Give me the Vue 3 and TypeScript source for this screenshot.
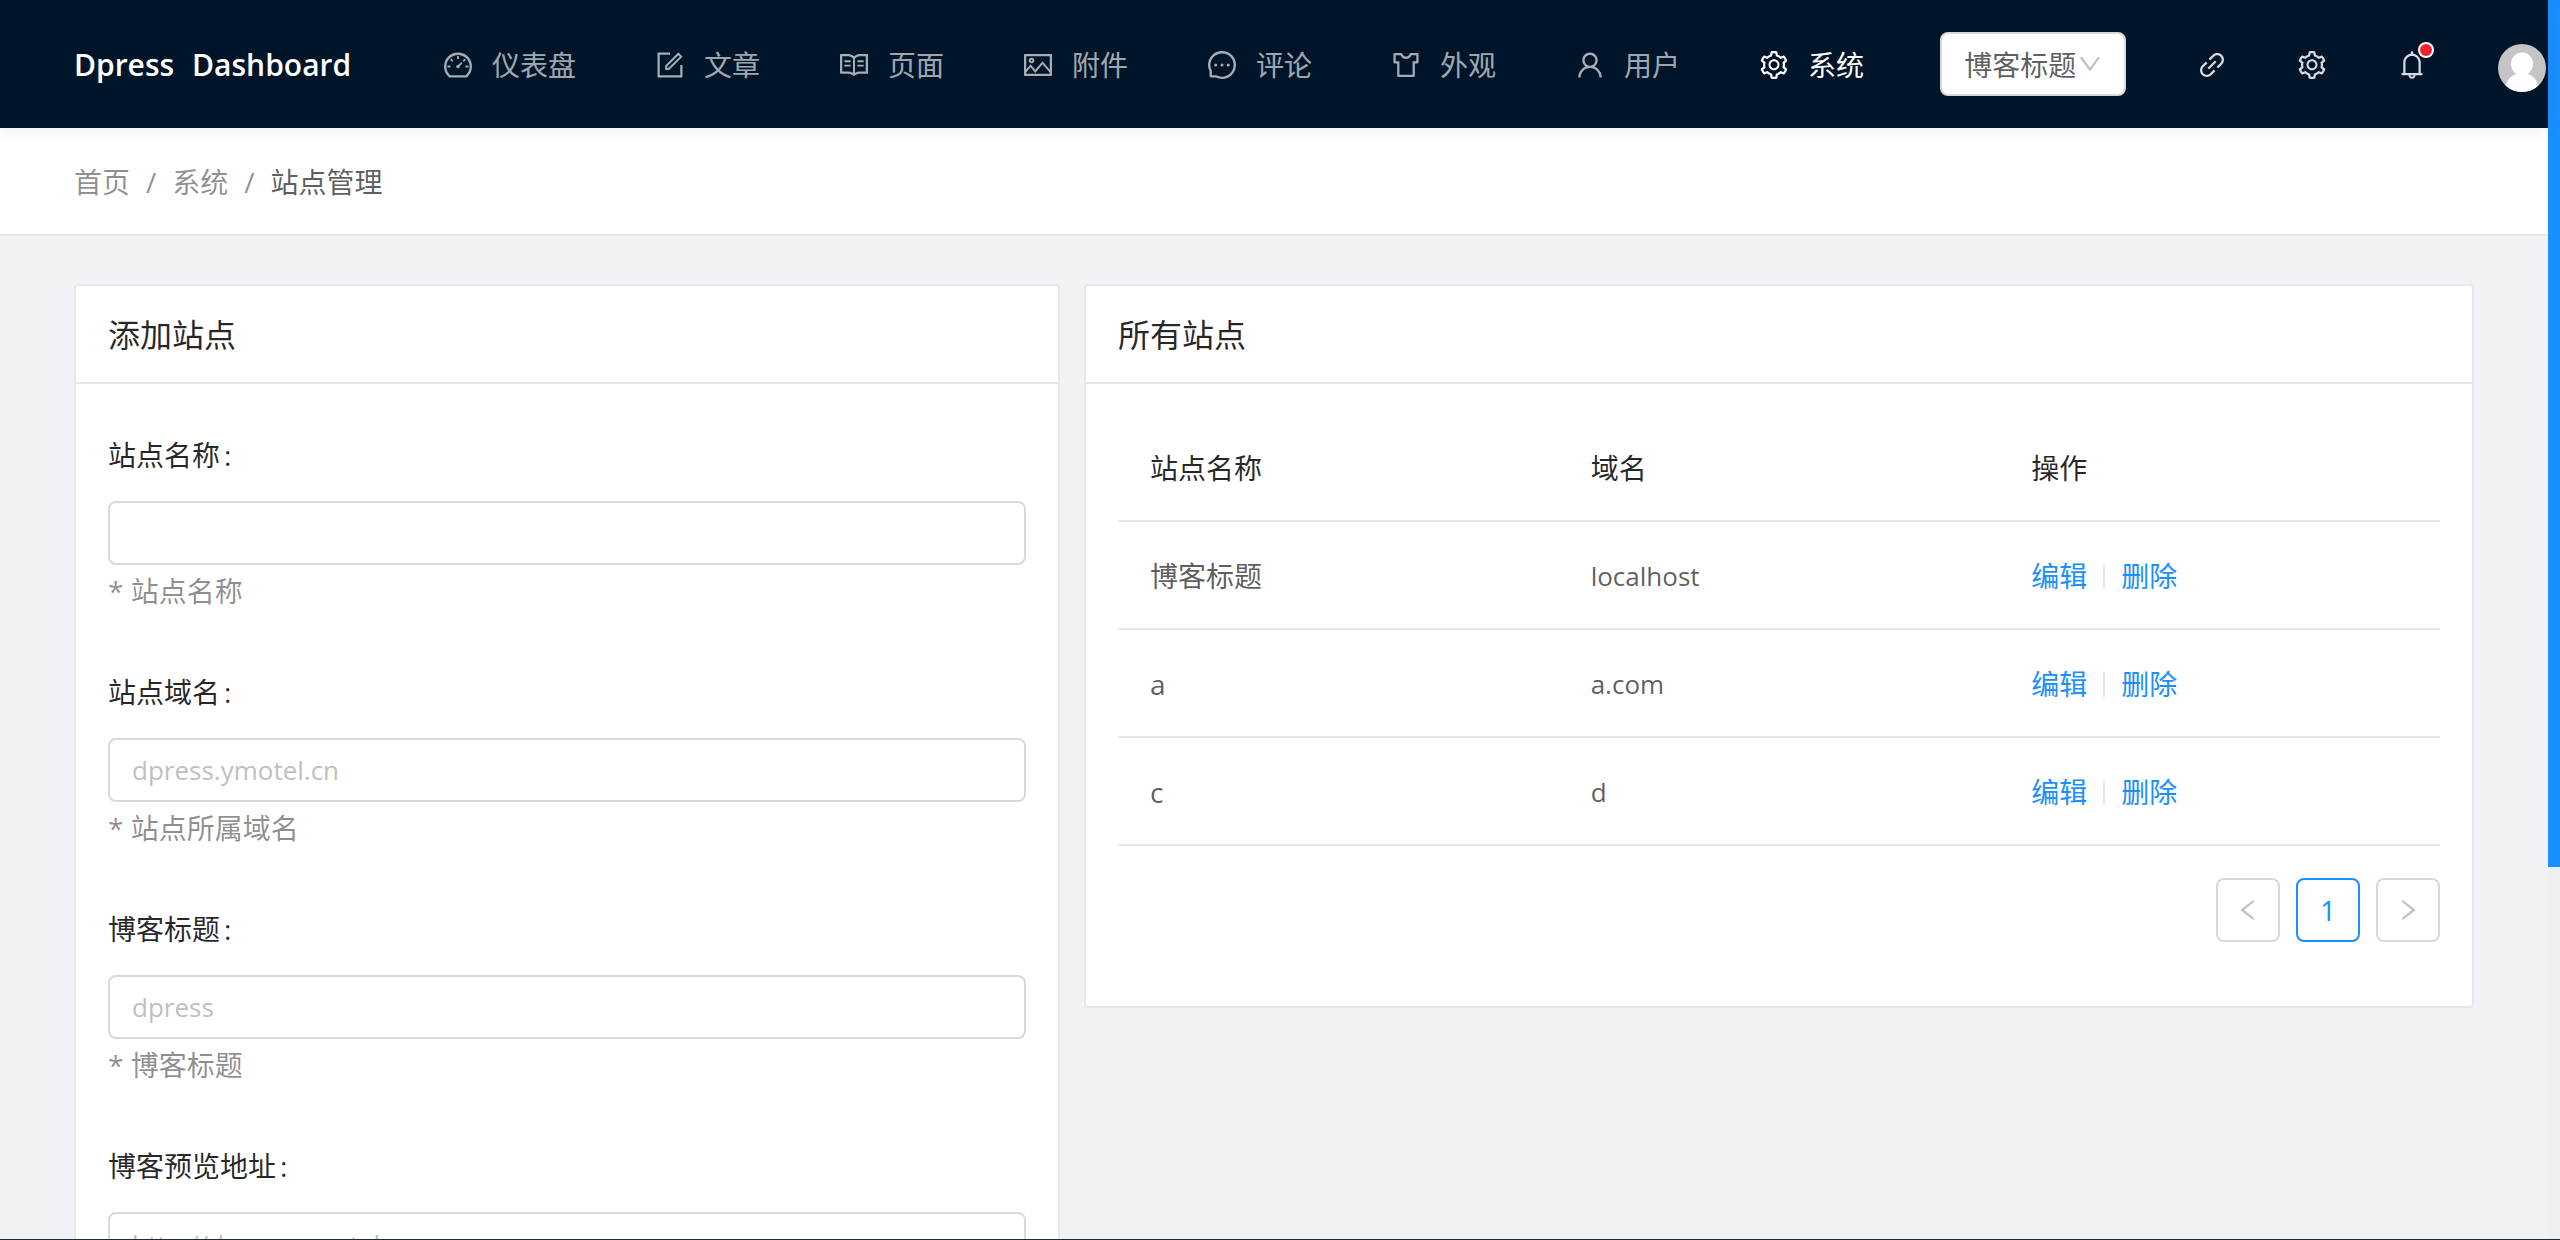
<script setup lang="ts">
import { ref } from 'vue'

interface NavItem {
  label: string
  icon: string
  active?: boolean
}

interface Field {
  id: string
  label: string
  placeholder: string
  help: string
}

interface Site {
  name: string
  domain: string
}

const icons: Record<string, string> = {
  dashboard:
    'M924.8 385.6a446.7 446.7 0 0 0-96-142.4 446.7 446.7 0 0 0-142.4-96C631.1 123.8 572.5 112 512 112s-119.1 11.8-174.4 35.2a446.7 446.7 0 0 0-142.4 96 446.7 446.7 0 0 0-96 142.4C75.8 440.9 64 499.5 64 560c0 132.7 58.3 257.7 159.9 343.1l1.7 1.4c5.8 4.8 13.1 7.5 20.6 7.5h531.7c7.5 0 14.8-2.7 20.6-7.5l1.7-1.4C901.7 817.7 960 692.7 960 560c0-60.5-11.9-119.1-35.2-174.4zM761.4 836H262.6A371.12 371.12 0 0 1 140 560c0-99.4 38.7-192.8 109-263 70.3-70.3 163.7-109 263-109 99.4 0 192.8 38.7 263 109 70.3 70.3 109 163.7 109 263 0 105.6-44.5 205.5-122.6 276zM623.5 421.5a8.03 8.03 0 0 0-11.3 0L527.7 506c-18.7-5-39.4-.2-54.1 14.5a55.95 55.95 0 0 0 0 79.2 55.95 55.95 0 0 0 79.2 0 55.87 55.87 0 0 0 14.5-54.1l84.5-84.5c3.1-3.1 3.1-8.2 0-11.3l-28.3-28.3zM490 320h44c4.4 0 8-3.6 8-8v-80c0-4.4-3.6-8-8-8h-44c-4.4 0-8 3.6-8 8v80c0 4.4 3.6 8 8 8zm260 218v44c0 4.4 3.6 8 8 8h80c4.4 0 8-3.6 8-8v-44c0-4.4-3.6-8-8-8h-80c-4.4 0-8 3.6-8 8zm12.7-197.2l-31.1-31.1a8.03 8.03 0 0 0-11.3 0l-56.6 56.6a8.03 8.03 0 0 0 0 11.3l31.1 31.1c3.1 3.1 8.2 3.1 11.3 0l56.6-56.6c3.1-3.1 3.1-8.2 0-11.3zm-458.6-31.1a8.03 8.03 0 0 0-11.3 0l-31.1 31.1a8.03 8.03 0 0 0 0 11.3l56.6 56.6c3.1 3.1 8.2 3.1 11.3 0l31.1-31.1c3.1-3.1 3.1-8.2 0-11.3l-56.6-56.6zM262 530h-80c-4.4 0-8 3.6-8 8v44c0 4.4 3.6 8 8 8h80c4.4 0 8-3.6 8-8v-44c0-4.4-3.6-8-8-8z',
  form:
    'M904 512h-56c-4.4 0-8 3.6-8 8v320H184V184h320c4.4 0 8-3.6 8-8v-56c0-4.4-3.6-8-8-8H144c-17.7 0-32 14.3-32 32v736c0 17.7 14.3 32 32 32h736c17.7 0 32-14.3 32-32V520c0-4.4-3.6-8-8-8zM355.9 534.9L354 653.8c-.1 8.9 7.1 16.2 16 16.2h.4l118-2.9c2-.1 4-.9 5.4-2.3l415.9-415c3.1-3.1 3.1-8.2 0-11.3L785.4 114.3c-1.6-1.6-3.6-2.3-5.7-2.3s-4.1.8-5.7 2.3l-415.8 415a8.3 8.3 0 0 0-2.3 5.6zm63.5 23.6L779.7 199l45.2 45.1-360.5 359.7-45.7 1.1.7-46.4z',
  read:
    'M928 161H699.2c-49.1 0-97.1 14.1-138.4 40.7L512 233l-48.8-31.3A255.2 255.2 0 0 0 324.8 161H96c-17.7 0-32 14.3-32 32v568c0 17.7 14.3 32 32 32h228.8c49.1 0 97.1 14.1 138.4 40.7l44.4 28.6c1.3.8 2.8 1.3 4.3 1.3s3-.4 4.3-1.3l44.4-28.6C602 807.1 650.1 793 699.2 793H928c17.7 0 32-14.3 32-32V193c0-17.7-14.3-32-32-32zM324.8 721H136V233h188.8c35.4 0 69.8 10.1 99.5 29.2l48.8 31.3 6.9 4.5v462c-47.6-25.6-100.8-39-155.2-39zm563.2 0H699.2c-54.4 0-107.6 13.4-155.2 39V298l6.9-4.5 48.8-31.3c29.7-19.1 64.1-29.2 99.5-29.2H888v488zM396.9 361H211.1c-3.9 0-7.1 3.4-7.1 7.5v45c0 4.1 3.2 7.5 7.1 7.5h185.7c3.9 0 7.1-3.4 7.1-7.5v-45c.1-4.1-3.1-7.5-7-7.5zm223.1 7.5v45c0 4.1 3.2 7.5 7.1 7.5h185.7c3.9 0 7.1-3.4 7.1-7.5v-45c0-4.1-3.2-7.5-7.1-7.5H627.1c-3.9 0-7.1 3.4-7.1 7.5zM396.9 501H211.1c-3.9 0-7.1 3.4-7.1 7.5v45c0 4.1 3.2 7.5 7.1 7.5h185.7c3.9 0 7.1-3.4 7.1-7.5v-45c.1-4.1-3.1-7.5-7-7.5zm416 0H627.1c-3.9 0-7.1 3.4-7.1 7.5v45c0 4.1 3.2 7.5 7.1 7.5h185.7c3.9 0 7.1-3.4 7.1-7.5v-45c.1-4.1-3.1-7.5-7-7.5z',
  picture:
    'M928 160H96c-17.7 0-32 14.3-32 32v640c0 17.7 14.3 32 32 32h832c17.7 0 32-14.3 32-32V192c0-17.7-14.3-32-32-32zm-40 632H136v-39.9l138.5-164.3 150.1 178L658.1 489 888 761.6V792zm0-129.8L664.2 396.8c-3.2-3.8-9-3.8-12.2 0L424.6 666.4l-144-170.7c-3.2-3.8-9-3.8-12.2 0L136 652.7V232h752v430.2zM304 456a88 88 0 1 0 0-176 88 88 0 0 0 0 176zm0-116c15.5 0 28 12.5 28 28s-12.5 28-28 28-28-12.5-28-28 12.5-28 28-28z',
  message:
    'M464 512a48 48 0 1 0 96 0 48 48 0 1 0-96 0zm200 0a48 48 0 1 0 96 0 48 48 0 1 0-96 0zm-400 0a48 48 0 1 0 96 0 48 48 0 1 0-96 0zm661.2-173.6c-22.6-53.7-55-101.9-96.3-143.3a444.35 444.35 0 0 0-143.3-96.3C630.6 75.7 572.2 64 512 64h-2c-60.6.3-119.3 12.3-174.5 35.9a445.35 445.35 0 0 0-142 96.5c-40.9 41.3-73 89.3-95.2 142.8-23 55.4-34.6 114.3-34.3 174.9A449.4 449.4 0 0 0 112 714v152a46 46 0 0 0 46 46h152.1A449.4 449.4 0 0 0 510 960h2.1c59.9 0 118-11.6 172.7-34.3a444.48 444.48 0 0 0 142.8-95.2c41.3-40.9 73.8-88.7 96.5-142 23.6-55.2 35.6-113.9 35.9-174.5.3-60.9-11.5-120-34.8-175.6zm-151.1 438C704 845.8 611 884 512 884h-1.7c-60.3-.3-120.2-15.3-173.1-43.5l-8.4-4.5H188V695.2l-4.5-8.4C155.3 633.9 140.3 574 140 513.7c-.4-99.7 37.7-193.3 107.6-263.8 69.8-70.5 163.1-109.5 262.8-109.9h1.7c50 0 98.5 9.7 144.2 28.9 44.6 18.7 84.6 45.6 119 80 34.3 34.3 61.3 74.4 80 119 19.4 46.2 29.1 95.2 28.9 145.8-.6 99.6-39.7 192.9-110.1 262.7z',
  skin:
    'M870 126H663.8c-17.4 0-32.9 11.9-37 29.3C614.3 208.1 567 246 512 246s-102.3-37.9-114.8-90.7a37.93 37.93 0 0 0-37-29.3H154a44 44 0 0 0-44 44v252a44 44 0 0 0 44 44h75v388a44 44 0 0 0 44 44h478a44 44 0 0 0 44-44V466h75a44 44 0 0 0 44-44V170a44 44 0 0 0-44-44zm-28 268H723v432H301V394H182V198h153.3c28.2 71.2 97.5 120 176.7 120s148.5-48.8 176.7-120H842v196z',
  user:
    'M858.5 763.6a374 374 0 0 0-80.6-119.5 375.63 375.63 0 0 0-119.5-80.6c-.4-.2-.8-.3-1.2-.5C719.5 518 760 444.7 760 362c0-137-111-248-248-248S264 225 264 362c0 82.7 40.5 156 102.8 201.1-.4.2-.8.3-1.2.5-44.8 18.9-85 46-119.5 80.6a375.63 375.63 0 0 0-80.6 119.5A371.7 371.7 0 0 0 136 901.8a8 8 0 0 0 8 8.2h60c4.4 0 7.9-3.5 8-7.8 2-77.2 33-149.5 87.8-204.3 56.7-56.7 132-87.9 212.2-87.9s155.5 31.2 212.2 87.9C779 752.7 810 825 812 902.2c.1 4.4 3.6 7.8 8 7.8h60a8 8 0 0 0 8-8.2c-1-47.8-10.9-94.3-29.5-138.2zM512 534c-45.9 0-89.1-17.9-121.6-50.4S340 407.9 340 362c0-45.9 17.9-89.1 50.4-121.6S466.1 190 512 190s89.1 17.9 121.6 50.4S684 316.1 684 362c0 45.9-17.9 89.1-50.4 121.6S557.9 534 512 534z',
  setting:
    'M924.8 625.7l-65.5-56c3.1-19 4.7-38.4 4.7-57.8s-1.6-38.8-4.7-57.8l65.5-56a32.03 32.03 0 0 0 9.3-35.2l-.9-2.6a443.74 443.74 0 0 0-79.7-137.9l-1.8-2.1a32.12 32.12 0 0 0-35.1-9.5l-81.3 28.9c-30-24.6-63.5-44-99.7-57.6l-15.7-85a32.05 32.05 0 0 0-25.8-25.7l-2.7-.5c-52.1-9.4-106.9-9.4-159 0l-2.7.5a32.05 32.05 0 0 0-25.8 25.7l-15.8 85.4a351.86 351.86 0 0 0-99 57.4l-81.9-29.1a32 32 0 0 0-35.1 9.5l-1.8 2.1a446.02 446.02 0 0 0-79.7 137.9l-.9 2.6c-4.5 12.5-.8 26.5 9.3 35.2l66.3 56.6c-3.1 18.8-4.6 38-4.6 57.1 0 19.2 1.5 38.4 4.6 57.1L99 625.5a32.03 32.03 0 0 0-9.3 35.2l.9 2.6c18.1 50.4 44.9 96.9 79.7 137.9l1.8 2.1a32.12 32.12 0 0 0 35.1 9.5l81.9-29.1c29.8 24.5 63.1 43.9 99 57.4l15.8 85.4a32.05 32.05 0 0 0 25.8 25.7l2.7.5a449.4 449.4 0 0 0 159 0l2.7-.5a32.05 32.05 0 0 0 25.8-25.7l15.7-85a350 350 0 0 0 99.7-57.6l81.3 28.9a32 32 0 0 0 35.1-9.5l1.8-2.1c34.8-41.1 61.6-87.5 79.7-137.9l.9-2.6c4.5-12.3.8-26.3-9.3-35zM788.3 465.9c2.5 15.1 3.8 30.6 3.8 46.1s-1.3 31-3.8 46.1l-6.6 40.1 74.7 63.9a370.03 370.03 0 0 1-42.6 73.6L721 702.8l-31.4 25.8c-23.9 19.6-50.5 35-79.3 45.8l-38.1 14.3-17.9 97a377.5 377.5 0 0 1-85 0l-17.9-97.2-37.8-14.5c-28.5-10.8-55-26.2-78.7-45.7l-31.4-25.9-93.4 33.2c-17-22.9-31.2-47.6-42.6-73.6l75.5-64.5-6.5-40c-2.4-14.9-3.7-30.3-3.7-45.5 0-15.3 1.2-30.6 3.7-45.5l6.5-40-75.5-64.5c11.3-26.1 25.6-50.7 42.6-73.6l93.4 33.2 31.4-25.9c23.7-19.5 50.2-34.9 78.7-45.7l37.9-14.3 17.9-97.2c28.1-3.2 56.8-3.2 85 0l17.9 97 38.1 14.3c28.7 10.8 55.4 26.2 79.3 45.8l31.4 25.8 92.8-32.9c17 22.9 31.2 47.6 42.6 73.6L781.8 426l6.5 39.9zM512 326c-97.2 0-176 78.8-176 176s78.8 176 176 176 176-78.8 176-176-78.8-176-176-176zm79.2 255.2A111.6 111.6 0 0 1 512 614c-29.9 0-58-11.7-79.2-32.8A111.6 111.6 0 0 1 400 502c0-29.9 11.7-58 32.8-79.2C454 401.6 482.1 390 512 390c29.9 0 58 11.6 79.2 32.8A111.6 111.6 0 0 1 624 502c0 29.9-11.7 58-32.8 79.2z',
  link:
    'M574 665.4a8.03 8.03 0 0 0-11.3 0L446.5 781.6c-53.8 53.8-144.6 59.5-204 0-59.5-59.5-53.8-150.2 0-204l116.2-116.2c3.1-3.1 3.1-8.2 0-11.3l-39.8-39.8a8.03 8.03 0 0 0-11.3 0L191.4 526.5c-84.6 84.6-84.6 221.5 0 306s221.5 84.6 306 0l116.2-116.2c3.1-3.1 3.1-8.2 0-11.3L574 665.4zm258.6-474c-84.6-84.6-221.5-84.6-306 0L410.3 307.6a8.03 8.03 0 0 0 0 11.3l39.7 39.7c3.1 3.1 8.2 3.1 11.3 0l116.2-116.2c53.8-53.8 144.6-59.5 204 0 59.5 59.5 53.8 150.2 0 204L665.3 562.6a8.03 8.03 0 0 0 0 11.3l39.8 39.8c3.1 3.1 8.2 3.1 11.3 0l116.2-116.2c84.5-84.6 84.5-221.5 0-306.1zM610.1 372.3a8.03 8.03 0 0 0-11.3 0L372.3 598.7a8.03 8.03 0 0 0 0 11.3l39.6 39.6c3.1 3.1 8.2 3.1 11.3 0l226.4-226.4c3.1-3.1 3.1-8.2 0-11.3l-39.5-39.6z',
  bell:
    'M816 768h-24V428c0-141.1-104.3-257.7-240-277.1V112c0-22.1-17.9-40-40-40s-40 17.9-40 40v38.9c-135.7 19.4-240 136-240 277.1v340h-24c-17.7 0-32 14.3-32 32v32c0 4.4 3.6 8 8 8h216c0 61.8 50.2 112 112 112s112-50.2 112-112h216c4.4 0 8-3.6 8-8v-32c0-17.7-14.3-32-32-32zM512 888c-26.5 0-48-21.5-48-48h96c0 26.5-21.5 48-48 48zM304 768V428c0-55.6 21.6-107.8 60.9-147.1S456.4 220 512 220c55.6 0 107.8 21.6 147.1 60.9S720 372.4 720 428v340H304z',
  down:
    'M884 256h-75c-5.1 0-9.9 2.5-12.9 6.6L512 654.2 227.9 262.6c-3-4.1-7.8-6.6-12.9-6.6h-75c-6.5 0-10.3 7.4-6.5 12.7l352.6 486.1c12.8 17.6 39 17.6 51.7 0l352.6-486.1c3.9-5.3.1-12.7-6.4-12.7z',
  left:
    'M724 218.3V141c0-6.7-7.7-10.4-12.9-6.3L260.3 486.8a31.86 31.86 0 0 0 0 50.3l450.8 352.1c5.3 4.1 12.9.4 12.9-6.3v-77.3c0-4.9-2.3-9.6-6.1-12.6l-360-281 360-281.1c3.8-3 6.1-7.7 6.1-12.6z',
  right:
    'M765.7 486.8L314.9 134.7A7.97 7.97 0 0 0 302 141v77.3c0 4.9 2.3 9.6 6.1 12.6l360 281.1-360 281.1c-3.9 3-6.1 7.7-6.1 12.6V883c0 6.7 7.7 10.4 12.9 6.3l450.8-352.1a31.96 31.96 0 0 0 0-50.4z',
}

const nav: NavItem[] = [
  { label: '仪表盘', icon: 'dashboard' },
  { label: '文章', icon: 'form' },
  { label: '页面', icon: 'read' },
  { label: '附件', icon: 'picture' },
  { label: '评论', icon: 'message' },
  { label: '外观', icon: 'skin' },
  { label: '用户', icon: 'user' },
  { label: '系统', icon: 'setting', active: true },
]

const fields: Field[] = [
  { id: 'site-name', label: '站点名称', placeholder: '', help: '* 站点名称' },
  { id: 'site-domain', label: '站点域名', placeholder: 'dpress.ymotel.cn', help: '* 站点所属域名' },
  { id: 'blog-title', label: '博客标题', placeholder: 'dpress', help: '* 博客标题' },
  { id: 'blog-url', label: '博客预览地址', placeholder: 'http://dpress.ymotel.cn', help: '* 博客预览地址' },
]

const sites: Site[] = [
  { name: '博客标题', domain: 'localhost' },
  { name: 'a', domain: 'a.com' },
  { name: 'c', domain: 'd' },
]

const values = ref<Record<string, string>>({})
const currentSite = ref('博客标题')
</script>

<template>
  <div class="viewport">
    <div class="page">
      <header class="topbar">
        <a class="brand" href="#"><span>Dpress</span><span>Dashboard</span></a>
        <nav class="menu">
          <a v-for="item in nav" :key="item.label" href="#" class="menu-item" :class="{ active: item.active }">
            <svg class="icon" viewBox="64 64 896 896" aria-hidden="true"><path :d="icons[item.icon]" /></svg>
            <span>{{ item.label }}</span>
          </a>
        </nav>
        <div class="site-select">
          <select v-model="currentSite" aria-label="站点">
            <option>博客标题</option>
          </select>
          <svg class="caret" viewBox="64 64 896 896" aria-hidden="true"><path :d="icons.down" /></svg>
        </div>
        <div class="actions">
          <button type="button" aria-label="打开站点">
            <svg class="icon" viewBox="64 64 896 896"><path :d="icons.link" /></svg>
          </button>
          <button type="button" aria-label="设置">
            <svg class="icon" viewBox="64 64 896 896"><path :d="icons.setting" /></svg>
          </button>
          <button type="button" aria-label="通知" class="notice">
            <svg class="icon" viewBox="64 64 896 896"><path :d="icons.bell" /></svg>
            <span class="dot"></span>
          </button>
          <button type="button" aria-label="用户" class="user">
            <svg class="avatar" viewBox="0 0 48 48">
              <defs>
                <clipPath id="avatar-clip"><circle cx="24" cy="24" r="24" /></clipPath>
              </defs>
              <g clip-path="url(#avatar-clip)">
                <rect width="48" height="48" fill="#c5c5c5" />
                <ellipse cx="24" cy="20" rx="11" ry="11.5" fill="#fff" />
                <path d="M19 27h10v3c6 1 10 6 12 13v6H7v-6c2-7 6-12 12-13z" fill="#fff" />
              </g>
            </svg>
          </button>
        </div>
      </header>

      <nav class="breadcrumb" aria-label="breadcrumb">
        <a href="#">首页</a>
        <span class="sep">/</span>
        <a href="#">系统</a>
        <span class="sep">/</span>
        <span class="current">站点管理</span>
      </nav>

      <main class="content">
        <section class="card">
          <h2 class="card-title">添加站点</h2>
          <form class="card-body" @submit.prevent>
            <div v-for="field in fields" :key="field.id" class="field">
              <label :for="field.id">{{ field.label }}<span class="colon">:</span></label>
              <input :id="field.id" v-model="values[field.id]" type="text" :placeholder="field.placeholder" />
              <p>{{ field.help }}</p>
            </div>
          </form>
        </section>

        <section class="card">
          <h2 class="card-title">所有站点</h2>
          <div class="card-body">
            <table>
              <thead>
                <tr>
                  <th scope="col">站点名称</th>
                  <th scope="col">域名</th>
                  <th scope="col">操作</th>
                </tr>
              </thead>
              <tbody>
                <tr v-for="site in sites" :key="site.name">
                  <td>{{ site.name }}</td>
                  <td class="domain">{{ site.domain }}</td>
                  <td>
                    <div class="ops">
                      <a href="#">编辑</a>
                      <span class="divider"></span>
                      <a href="#">删除</a>
                    </div>
                  </td>
                </tr>
              </tbody>
            </table>
            <div class="pagination">
              <button type="button" aria-label="上一页" disabled>
                <svg class="arrow" viewBox="64 64 896 896"><path :d="icons.left" /></svg>
              </button>
              <button type="button" class="current-page">1</button>
              <button type="button" aria-label="下一页" disabled>
                <svg class="arrow" viewBox="64 64 896 896"><path :d="icons.right" /></svg>
              </button>
            </div>
          </div>
        </section>
      </main>
    </div>
    <div class="scroll-track"><div class="scroll-thumb"></div></div>
  </div>
</template>

<style>
body {
  margin: 0;
  background: #f0f2f5;
}
</style>

<style scoped>
.viewport,
.viewport * {
  box-sizing: border-box;
}

.viewport {
  display: flex;
  height: 100vh;
  overflow: hidden;
  border-bottom: 1px solid #1d2b3a;
  background: #f0f2f5;
  color: rgba(0, 0, 0, 0.65);
  font-family: 'Open Sans', 'Noto Sans CJK SC', sans-serif;
  font-size: 28px;
  line-height: 42px;
}

.page {
  flex: 1;
  min-width: 0;
}

a {
  color: inherit;
  text-decoration: none;
}

button,
input,
select {
  margin: 0;
  font: inherit;
  color: inherit;
}

svg {
  display: block;
  flex: none;
  fill: currentColor;
}

.icon {
  width: 28px;
  height: 28px;
}

/* top bar */
.topbar {
  position: relative;
  display: flex;
  align-items: center;
  height: 128px;
  padding: 0 2px 0 74px;
  background: #001529;
  box-shadow: 0 2px 16px rgba(0, 21, 41, 0.08);
}

.brand {
  display: flex;
  flex: 0 0 330px;
  gap: 18px;
  padding-top: 2px;
  color: #fff;
  font-size: 30px;
  font-weight: 600;
}

.menu {
  display: flex;
  padding-top: 2px;
}

.menu-item {
  display: flex;
  align-items: center;
  gap: 20px;
  padding: 0 40px;
  color: rgba(255, 255, 255, 0.65);
  white-space: nowrap;
}

.menu-item.active {
  color: #fff;
}

.site-select {
  position: relative;
  margin-left: 36px;
}

.site-select select {
  display: block;
  width: 186px;
  height: 64px;
  padding: 2px 22px 0;
  border: 2px solid #d9d9d9;
  border-radius: 8px;
  background: #fff;
  color: rgba(0, 0, 0, 0.65);
  appearance: none;
}

.caret {
  position: absolute;
  top: 20px;
  right: 24px;
  width: 24px;
  height: 24px;
  color: #bfbfbf;
  pointer-events: none;
}

.actions {
  display: flex;
  align-items: center;
  gap: 72px;
  margin-left: auto;
  padding-top: 2px;
  color: rgba(255, 255, 255, 0.85);
}

.actions button {
  padding: 0;
  border: 0;
  background: none;
}

.notice {
  position: relative;
}

.dot {
  position: absolute;
  top: -7px;
  right: -6px;
  width: 12px;
  height: 12px;
  border-radius: 50%;
  background: #f5222d;
  box-shadow: 0 0 0 2px #fff;
}

.actions .user {
  padding-top: 6px;
}

.avatar {
  width: 48px;
  height: 48px;
}

/* breadcrumb */
.breadcrumb {
  display: flex;
  align-items: center;
  height: 108px;
  padding: 2px 74px 0;
  border-bottom: 2px solid #e8e8e8;
  background: #fff;
  color: rgba(0, 0, 0, 0.45);
}

.sep {
  margin: 0 16px;
}

.current {
  color: rgba(0, 0, 0, 0.65);
}

/* cards */
.content {
  display: grid;
  grid-template-columns: 986fr 1390fr;
  align-items: start;
  gap: 24px;
  padding: 48px 74px;
}

.card {
  border: 2px solid #e8e8e8;
  border-radius: 4px;
  background: #fff;
}

.card-title {
  margin: 0;
  padding: 25px 32px 23px;
  border-bottom: 2px solid #e8e8e8;
  color: rgba(0, 0, 0, 0.85);
  font-size: 32px;
  font-weight: 400;
  line-height: 48px;
}

.card-body {
  padding: 32px;
}

.field {
  margin-bottom: 36px;
}

.field label {
  display: block;
  margin-bottom: 7px;
  color: rgba(0, 0, 0, 0.85);
  line-height: 78px;
}

.colon {
  margin-left: 4px;
}

.field input {
  display: block;
  width: 100%;
  height: 64px;
  padding: 0 22px;
  border: 2px solid #d9d9d9;
  border-radius: 8px;
  background: #fff;
  font-size: 26px;
  outline: none;
}

.field input::placeholder {
  color: #bfbfbf;
  opacity: 1;
}

.field p {
  margin: 0;
  color: rgba(0, 0, 0, 0.45);
  line-height: 52px;
}

/* table */
table {
  width: 100%;
  border-collapse: separate;
  border-spacing: 0;
  table-layout: fixed;
}

th,
td {
  height: 108px;
  padding: 2px 32px 0;
  border-bottom: 2px solid #e8e8e8;
  font-weight: 400;
  text-align: left;
}

th {
  height: 106px;
  padding-top: 0;
  color: rgba(0, 0, 0, 0.85);
}

.domain {
  font-size: 26px;
}

.ops {
  display: flex;
  align-items: center;
  gap: 16px;
  color: #1890ff;
}

.divider {
  width: 2px;
  height: 25px;
  background: #e8e8e8;
}

.pagination {
  display: flex;
  justify-content: flex-end;
  gap: 16px;
  margin: 32px 0;
}

.pagination button {
  display: flex;
  align-items: center;
  justify-content: center;
  width: 64px;
  height: 64px;
  padding: 0;
  border: 2px solid #d9d9d9;
  border-radius: 8px;
  background: #fff;
  color: #bfbfbf;
}

.pagination .current-page {
  border-color: #1890ff;
  color: #1890ff;
}

.arrow {
  width: 24px;
  height: 24px;
}

/* page scrollbar */
.scroll-track {
  flex: none;
  width: 12px;
  background: #efefef;
}

.scroll-thumb {
  height: 70%;
  background: #1890ff;
}
</style>
